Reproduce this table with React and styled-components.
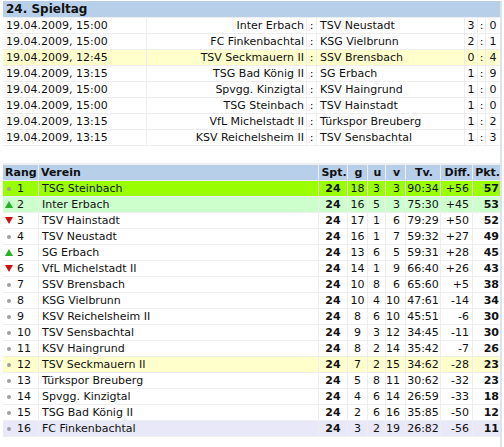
import styled, { createGlobalStyle } from "styled-components";

const GlobalStyle = createGlobalStyle`
  html, body {
    margin: 0;
    padding: 0;
    background: #ffffff;
  }
  body {
    font-family: "DejaVu Sans", Verdana, sans-serif;
    font-size: 11px;
    color: #111;
  }
`;

const matches = [
  { date: "19.04.2009, 15:00", home: "Inter Erbach", away: "TSV Neustadt", score: [3, 0] },
  { date: "19.04.2009, 15:00", home: "FC Finkenbachtal", away: "KSG Vielbrunn", score: [2, 1] },
  { date: "19.04.2009, 12:45", home: "TSV Seckmauern II", away: "SSV Brensbach", score: [0, 4], mark: true },
  { date: "19.04.2009, 13:15", home: "TSG Bad König II", away: "SG Erbach", score: [1, 9] },
  { date: "19.04.2009, 15:00", home: "Spvgg. Kinzigtal", away: "KSV Haingrund", score: [1, 0] },
  { date: "19.04.2009, 15:00", home: "TSG Steinbach", away: "TSV Hainstadt", score: [1, 0] },
  { date: "19.04.2009, 13:15", home: "VfL Michelstadt II", away: "Türkspor Breuberg", score: [1, 2] },
  { date: "19.04.2009, 13:15", home: "KSV Reichelsheim II", away: "TSV Sensbachtal", score: [1, 3] },
];

// trend: up | down | same, tone: leader | promo | mark | last
const standings = [
  [1, "same", "TSG Steinbach", 18, 3, 3, "90:34", "+56", 57, "leader"],
  [2, "up", "Inter Erbach", 16, 5, 3, "75:30", "+45", 53, "promo"],
  [3, "down", "TSV Hainstadt", 17, 1, 6, "79:29", "+50", 52],
  [4, "same", "TSV Neustadt", 16, 1, 7, "59:32", "+27", 49],
  [5, "up", "SG Erbach", 13, 6, 5, "59:31", "+28", 45],
  [6, "down", "VfL Michelstadt II", 14, 1, 9, "66:40", "+26", 43],
  [7, "same", "SSV Brensbach", 10, 8, 6, "65:60", "+5", 38],
  [8, "same", "KSG Vielbrunn", 10, 4, 10, "47:61", "-14", 34],
  [9, "same", "KSV Reichelsheim II", 8, 6, 10, "45:51", "-6", 30],
  [10, "same", "TSV Sensbachtal", 9, 3, 12, "34:45", "-11", 30],
  [11, "same", "KSV Haingrund", 8, 2, 14, "35:42", "-7", 26],
  [12, "same", "TSV Seckmauern II", 7, 2, 15, "34:62", "-28", 23, "mark"],
  [13, "same", "Türkspor Breuberg", 5, 8, 11, "30:62", "-32", 23],
  [14, "same", "Spvgg. Kinzigtal", 4, 6, 14, "26:59", "-33", 18],
  [15, "same", "TSG Bad König II", 2, 6, 16, "35:85", "-50", 12],
  [16, "same", "FC Finkenbachtal", 3, 2, 19, "26:82", "-56", 11, "last"],
];

const tones = {
  leader: "#99ff00",
  promo: "#ccffcc",
  mark: "#ffffcc",
  last: "#e8e8f8",
};

const Page = styled.div`
  width: 497px;
  margin: 1px 0 0 3px;
  border-right: 2px solid #dbe4ef;
  padding-bottom: 10px;
`;

const Table = styled.table`
  width: 497px;
  table-layout: fixed;
  border-collapse: separate;
  border-spacing: 0;
  font-size: 11px;

  & + & {
    margin-top: 17px;
    border-top: 2px solid #eeeeee;
  }
`;

const Row = styled.tr`
  background: ${(p) => (p.$tone ? tones[p.$tone] : "#ffffff")};
`;

const Head = styled.th`
  background: #b7cfe9;
  font-weight: bold;
  font-size: ${(p) => (p.$big ? "12px" : "11px")};
  line-height: ${(p) => (p.$big ? "16px" : "15px")};
  text-align: ${(p) => p.$align || "left"};
  padding: 0 ${(p) => (p.$big ? "3px" : "0")} 0 ${(p) => (p.$big ? "3px" : "2px")};
  border-right: 1px solid #eeeeee;
  border-bottom: 1px solid #eeeeee;
  white-space: nowrap;
  overflow: hidden;

  &:last-child {
    border-right: none;
  }
`;

const Cell = styled.td`
  text-align: ${(p) => p.$align || "left"};
  font-weight: ${(p) => (p.$bold ? "bold" : "normal")};
  line-height: 15px;
  height: 15px;
  padding: 0 ${(p) => p.$pr ?? 2}px 0 ${(p) => p.$pl ?? 2}px;
  border-right: 1px solid #eeeeee;
  border-bottom: 1px solid #eeeeee;
  white-space: nowrap;
  overflow: hidden;

  &:last-child {
    border-right: none;
  }
`;

const RankWrap = styled.div`
  display: flex;
  align-items: center;
  gap: 4px;
  height: 15px;
`;

const TrendBox = styled.span`
  display: flex;
  width: 8px;
  height: 8px;
  align-items: center;
  justify-content: center;
`;

const Dot = styled.span`
  width: 4px;
  height: 4px;
  border-radius: 50%;
  background: #a0a0a0;
`;

const Arrow = styled.span`
  width: 0;
  height: 0;
  border-left: 4px solid transparent;
  border-right: 4px solid transparent;
  ${(p) =>
    p.$up
      ? "border-bottom: 7px solid #22b422;"
      : "border-top: 7px solid #dd0a0a;"}
`;

const Trend = ({ kind }) => (
  <TrendBox>
    {kind === "same" ? <Dot /> : <Arrow $up={kind === "up"} />}
  </TrendBox>
);

const MatchDay = () => (
  <Table>
    <colgroup>
      <col style={{ width: 144 }} />
      <col style={{ width: 160 }} />
      <col style={{ width: 10 }} />
      <col style={{ width: 148 }} />
      <col style={{ width: 13 }} />
      <col style={{ width: 8 }} />
      <col style={{ width: 14 }} />
    </colgroup>
    <thead>
      <tr>
        <Head $big colSpan={7}>24. Spieltag</Head>
      </tr>
    </thead>
    <tbody>
      {matches.map((m, i) => (
        <Row key={i} $tone={m.mark ? "mark" : null}>
          <Cell $pl={3}>{m.date}</Cell>
          <Cell $align="right" $pr={2}>{m.home}</Cell>
          <Cell $align="center" $pl={0} $pr={0}>:</Cell>
          <Cell $pl={3}>{m.away}</Cell>
          <Cell $align="center" $pl={0} $pr={0}>{m.score[0]}</Cell>
          <Cell $align="center" $pl={0} $pr={0}>:</Cell>
          <Cell $align="center" $pl={0} $pr={0}>{m.score[1]}</Cell>
        </Row>
      ))}
    </tbody>
  </Table>
);

const Standings = () => (
  <Table>
    <colgroup>
      <col style={{ width: 36 }} />
      <col style={{ width: 280 }} />
      <col style={{ width: 29 }} />
      <col style={{ width: 20 }} />
      <col style={{ width: 18 }} />
      <col style={{ width: 20 }} />
      <col style={{ width: 35 }} />
      <col style={{ width: 32 }} />
      <col style={{ width: 27 }} />
    </colgroup>
    <thead>
      <tr>
        <Head>Rang</Head>
        <Head>Verein</Head>
        <Head $align="center">Spt.</Head>
        <Head $align="center">g</Head>
        <Head $align="center">u</Head>
        <Head $align="center">v</Head>
        <Head $align="center">Tv.</Head>
        <Head $align="center">Diff.</Head>
        <Head $align="right">Pkt.</Head>
      </tr>
    </thead>
    <tbody>
      {standings.map(([rank, trend, team, g, u, v, goals, diff, pts, tone]) => (
        <Row key={rank} $tone={tone}>
          <Cell $pl={2}>
            <RankWrap>
              <Trend kind={trend} />
              {rank}
            </RankWrap>
          </Cell>
          <Cell $pl={3}>{team}</Cell>
          <Cell $align="center" $bold>24</Cell>
          <Cell $align="center" $pl={0} $pr={0}>{g}</Cell>
          <Cell $align="center" $pl={0} $pr={0}>{u}</Cell>
          <Cell $align="right" $pl={0} $pr={5}>{v}</Cell>
          <Cell $align="center" $pl={0} $pr={0}>{goals}</Cell>
          <Cell $align="right" $pr={3}>{diff}</Cell>
          <Cell $align="right" $bold $pr={1}>{pts}</Cell>
        </Row>
      ))}
    </tbody>
  </Table>
);

export default function App() {
  return (
    <>
      <GlobalStyle />
      <Page>
        <MatchDay />
        <Standings />
      </Page>
    </>
  );
}
